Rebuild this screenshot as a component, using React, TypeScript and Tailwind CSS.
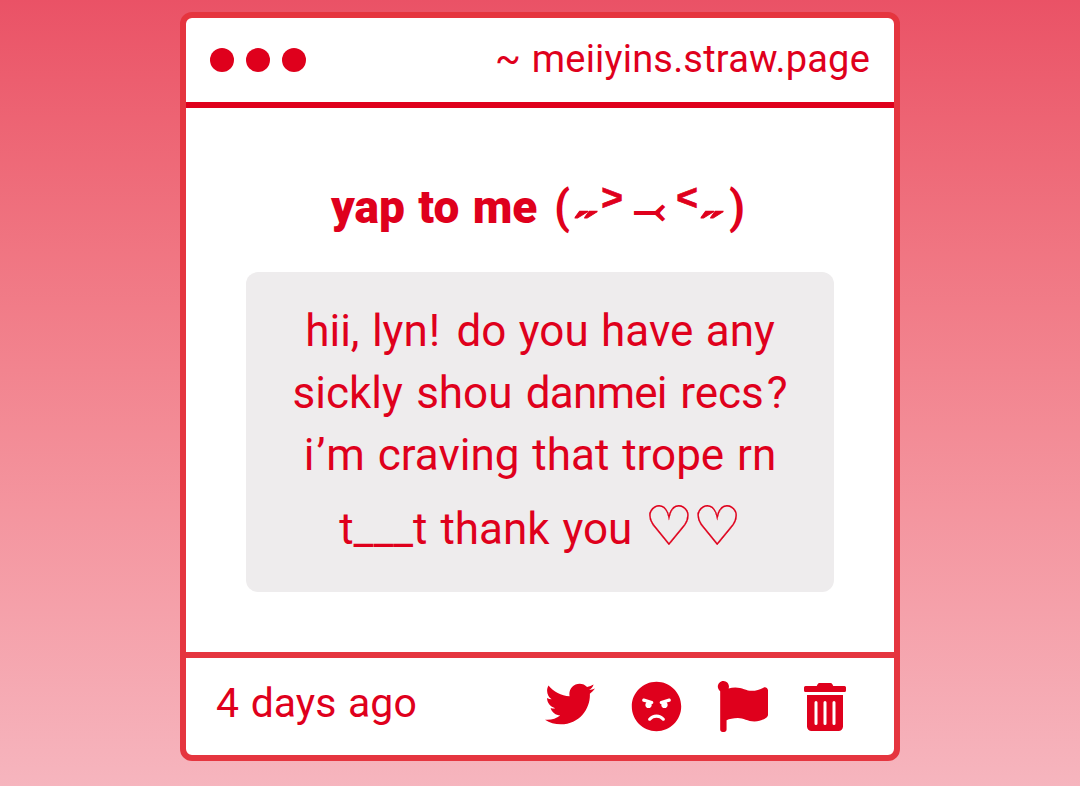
import { FaAngry, FaFlag, FaTrashAlt, FaTwitter } from "react-icons/fa";

export default function App() {
  return (
    <div className="flex h-[786px] w-[1080px] flex-col items-center overflow-hidden bg-linear-to-b from-[#ea5266] to-[#f6b5be] pt-3 font-[Roboto,'DejaVu_Sans',sans-serif] text-[#df001c]">
      <main className="flex h-[749px] w-[720px] flex-col overflow-hidden rounded-xl border-6 border-[#e5353f] bg-white">
        <header className="flex h-[90px] shrink-0 items-center justify-between border-b-6 border-[#df001c] px-6">
          <div className="flex gap-3">
            <span className="size-6 rounded-full bg-[#df001c]" />
            <span className="size-6 rounded-full bg-[#df001c]" />
            <span className="size-6 rounded-full bg-[#df001c]" />
          </div>
          <span className="pb-[3px] text-[38px] leading-[46px] tracking-[0.2px] whitespace-nowrap [word-spacing:1px]">~ meiiyins.straw.page</span>
        </header>
        <section className="flex h-[544px] shrink-0 flex-col items-center pt-[71px]">
          <h1 className="flex h-[56px] w-[418px] items-center text-[46px] leading-[56px] font-black whitespace-pre">
            <span className="w-[221px] shrink-0 [word-spacing:2px]">yap to me </span>
            <span className="flex w-[20px] shrink-0 justify-center font-bold">(</span>
            <span className="flex w-[28px] shrink-0 scale-x-[1.22] justify-center font-['DejaVu_Sans'] font-bold [-webkit-text-stroke:0.8px]">˶</span>
            <span className="flex w-[24px] shrink-0 -translate-y-[9px] justify-center font-['Liberation_Sans'] text-[37px] font-bold [-webkit-text-stroke:0.7px]">&gt;</span>
            <span className="flex w-[52px] shrink-0 translate-y-[3px] scale-x-[0.84] scale-y-[0.74] justify-center font-['DejaVu_Sans'] font-bold [-webkit-text-stroke:1.2px]">⤙</span>
            <span className="flex w-[22px] shrink-0 -translate-y-[9px] justify-center font-['Liberation_Sans'] text-[37px] font-bold [-webkit-text-stroke:0.7px]">&lt;</span>
            <span className="flex w-[28px] shrink-0 scale-x-[1.22] justify-center font-['DejaVu_Sans'] font-bold [-webkit-text-stroke:0.8px]">˶</span>
            <span className="flex w-[22px] shrink-0 justify-center font-bold">)</span>
          </h1>
          <div className="mt-[37px] flex h-[320px] w-[588px] flex-col items-center rounded-xl bg-[#eeeced] pt-7 text-[44px] leading-[62px] whitespace-nowrap [word-spacing:3px]">
            <p className="[word-spacing:1.5px]">hii, lyn<span className="mr-[4px] ml-[1px]">!</span> do you have any</p>
            <p className="[word-spacing:2.5px]">sickly shou <span className="tracking-[-0.8px]">danmei</span> recs<span className="ml-[3px]">?</span></p>
            <p className="[word-spacing:2px]">i<span className="mr-[1px] ml-[2px]">’</span>m craving that trope rn</p>
            <p className="mt-3 h-[62px] [word-spacing:2px]">t___t thank you <span className="relative top-[1px] -ml-[1px] text-[55px] leading-[40px] tracking-[-1px] [-webkit-text-stroke:0.2px]">♡♡</span></p>
          </div>
        </section>
        <footer className="flex h-[103px] shrink-0 items-center justify-between border-t-6 border-[#e5353f] pr-[45px] pl-[30px]">
          <span className="pb-[7px] text-[41px] leading-[50px] [word-spacing:1.5px]">4 days ago</span>
          <div className="flex items-center">
            <FaTwitter size={50} className="-mt-[5px]" />
            <FaAngry size={51} className="ml-9 -mt-[1px]" />
            <FaFlag size={51} className="ml-[35px] -mt-[1px]" />
            <FaTrashAlt size={48} className="ml-[33px]" />
          </div>
        </footer>
      </main>
    </div>
  );
}
